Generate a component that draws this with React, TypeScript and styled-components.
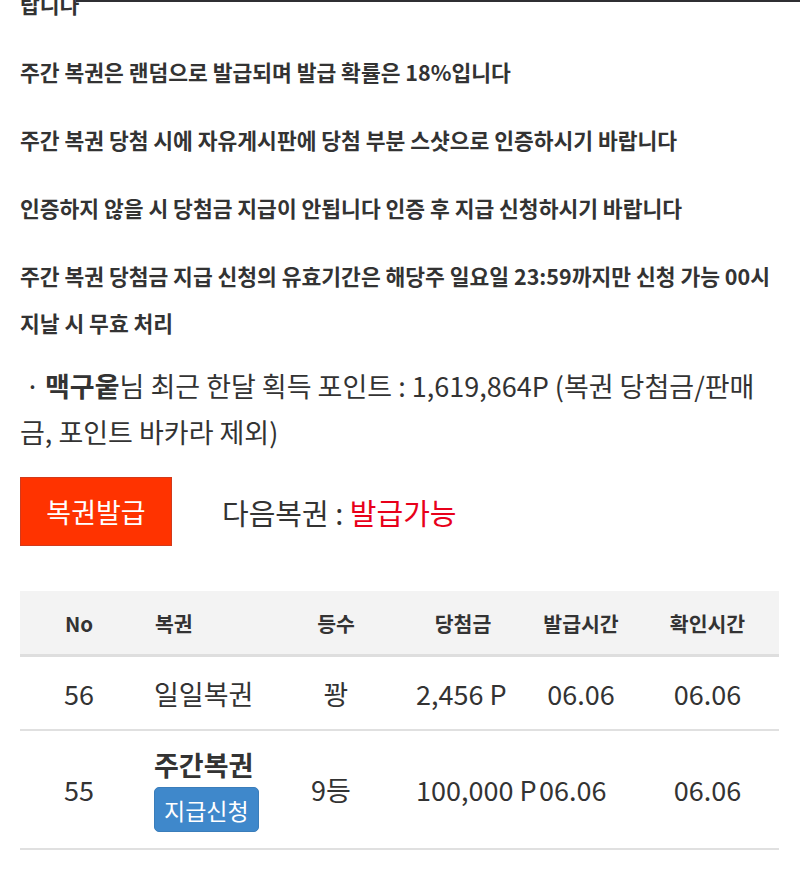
import { createGlobalStyle } from "styled-components";
import styled from "styled-components";

const GlobalStyle = createGlobalStyle`
  body {
    margin: 0;
    background: #fff;
    color: #333;
    font-family: "Noto Sans CJK KR", "Noto Sans", sans-serif;
  }
`;

const notices = [
  "랍니다",
  "주간 복권은 랜덤으로 발급되며 발급 확률은 18%입니다",
  "주간 복권 당첨 시에 자유게시판에 당첨 부분 스샷으로 인증하시기 바랍니다",
  "인증하지 않을 시 당첨금 지급이 안됩니다 인증 후 지급 신청하시기 바랍니다",
  "주간 복권 당첨금 지급 신청의 유효기간은 해당주 일요일 23:59까지만 신청 가능 00시 지날 시 무효 처리",
];

type Row = {
  no: number;
  name: string;
  weekly?: boolean;
  rank: string;
  prize: string;
  issued: string;
  checked: string;
};

const rows: Row[] = [
  { no: 56, name: "일일복권", rank: "꽝", prize: "2,456 P", issued: "06.06", checked: "06.06" },
  { no: 55, name: "주간복권", weekly: true, rank: "9등", prize: "100,000 P", issued: "06.06", checked: "06.06" },
];

function App() {
  return (
    <>
      <GlobalStyle />
      <TopEdge />
      <Page>
        {notices.map((text) => (
          <Notice key={text}>{text}</Notice>
        ))}

        <PointLine>
          <Dot>·</Dot>
          <strong>맥구웉</strong>님 최근 한달 획득 포인트 : 1,619,864P (복권 당첨금/판매금, 포인트 바카라 제외)
        </PointLine>

        <ActionRow>
          <IssueButton>복권발급</IssueButton>
          <NextInfo>
            다음복권 : <Available>발급가능</Available>
          </NextInfo>
        </ActionRow>

        <Table>
          <HeadRow>
            <HeadCell>No</HeadCell>
            <HeadCell $align="left">복권</HeadCell>
            <HeadCell>등수</HeadCell>
            <HeadCell>당첨금</HeadCell>
            <HeadCell>발급시간</HeadCell>
            <HeadCell>확인시간</HeadCell>
          </HeadRow>
          {rows.map((r) => (
            <BodyRow key={r.no} $tall={r.weekly}>
              <Cell>{r.no}</Cell>
              <Cell $align="left">
                {r.weekly ? (
                  <TicketStack>
                    <TicketName>{r.name}</TicketName>
                    <ClaimButton>지급신청</ClaimButton>
                  </TicketStack>
                ) : (
                  r.name
                )}
              </Cell>
              <Cell $shift={r.weekly ? -10 : 0}>{r.rank}</Cell>
              <Cell $align="left">{r.prize}</Cell>
              <Cell $align={r.weekly ? "left" : "center"} $pad={r.weekly ? 13 : 0}>
                {r.issued}
              </Cell>
              <Cell>{r.checked}</Cell>
            </BodyRow>
          ))}
        </Table>
      </Page>
    </>
  );
}

const TopEdge = styled.div`
  position: fixed;
  top: 0;
  left: 76px;
  right: 0;
  height: 2px;
  background: #2f2f33;
`;

const Page = styled.div`
  margin-top: -20px;
  padding: 0 21px 40px 20px;
`;

const Notice = styled.p`
  margin: 0 0 21px;
  font-size: 21.5px;
  font-weight: 700;
  line-height: 47px;
  color: #333;
`;

const PointLine = styled.p`
  margin: -4px 0 0;
  font-size: 27px;
  line-height: 46px;
  color: #333;

  strong {
    font-weight: 700;
  }
`;

const Dot = styled.span`
  display: inline-block;
  width: 25px;
  text-align: center;
`;

const ActionRow = styled.div`
  display: flex;
  align-items: center;
  gap: 50px;
  margin-top: 22px;
`;

const IssueButton = styled.button`
  width: 152px;
  height: 69px;
  background: #ff3300;
  border: 1px solid #d23a1c;
  color: #fff;
  font-family: inherit;
  font-size: 27px;
  padding: 0;
`;

const NextInfo = styled.div`
  font-size: 29px;
  color: #333;
`;

const Available = styled.span`
  color: #e8001a;
`;

const Table = styled.div`
  margin-top: 45px;
  width: 759px;
`;

const columns = "118px 134px 128px 126px 110px 143px";

const HeadRow = styled.div`
  display: grid;
  grid-template-columns: ${columns};
  height: 63px;
  align-items: center;
  background: #f3f3f3;
  border-bottom: 3px solid #dedede;
`;

const HeadCell = styled.div<{ $align?: "left" | "center" }>`
  text-align: ${(p) => p.$align ?? "center"};
  padding-left: ${(p) => (p.$align === "left" ? "17px" : "0")};
  font-size: 20.5px;
  font-weight: 700;
  color: #333;
`;

const BodyRow = styled.div<{ $tall?: boolean }>`
  display: grid;
  grid-template-columns: ${columns};
  height: ${(p) => (p.$tall ? "117px" : "72px")};
  align-items: center;
  border-bottom: 2px solid #e0e0e0;
`;

const Cell = styled.div<{ $align?: "left" | "center"; $pad?: number; $shift?: number }>`
  text-align: ${(p) => p.$align ?? "center"};
  padding-left: ${(p) => (p.$align === "left" ? `${p.$pad ?? 16}px` : "0")};
  margin-left: ${(p) => p.$shift ?? 0}px;
  font-size: 27px;
  color: #333;
  white-space: nowrap;
`;

const TicketStack = styled.div`
  display: flex;
  flex-direction: column;
  align-items: flex-start;
  gap: 6px;
  padding-top: 2px;
`;

const TicketName = styled.div`
  font-weight: 700;
  font-size: 27px;
  line-height: 32px;
`;

const ClaimButton = styled.button`
  height: 45px;
  padding: 0 9px;
  background: #3f88cb;
  border: 1px solid #3a7dba;
  border-radius: 5px;
  color: #fff;
  font-family: inherit;
  font-size: 23px;
`;

export default App;
